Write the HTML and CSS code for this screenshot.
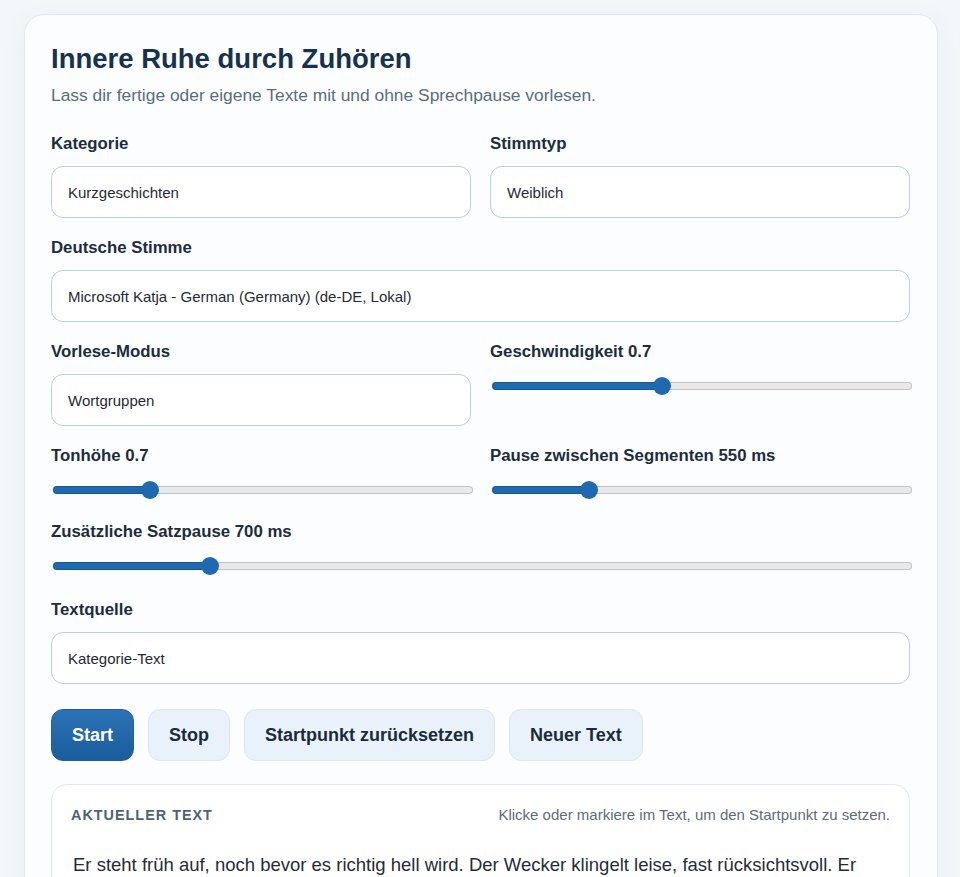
FILE: index.html
```html
<!DOCTYPE html>
<html lang="de">
<head>
<meta charset="utf-8">
<title>Innere Ruhe durch Zuhören</title>
<link rel="stylesheet" href="styles.css">
</head>
<body>
<div class="page">
  <main class="card">
    <h1 class="title">Innere Ruhe durch Zuhören</h1>
    <p class="subtitle">Lass dir fertige oder eigene Texte mit und ohne Sprechpause vorlesen.</p>

    <div class="form-grid">
      <div class="field">
        <label class="label">Kategorie</label>
        <select class="select"><option>Kurzgeschichten</option></select>
      </div>
      <div class="field">
        <label class="label">Stimmtyp</label>
        <select class="select"><option>Weiblich</option></select>
      </div>
      <div class="field field-wide">
        <label class="label">Deutsche Stimme</label>
        <select class="select"><option>Microsoft Katja - German (Germany) (de-DE, Lokal)</option></select>
      </div>
      <div class="field">
        <label class="label">Vorlese-Modus</label>
        <select class="select"><option>Wortgruppen</option></select>
      </div>
      <div class="field">
        <label class="label">Geschwindigkeit 0.7</label>
        <input class="range" type="range" min="0" max="100" value="40" style="--p:40%">
      </div>
      <div class="field">
        <label class="label">Tonhöhe 0.7</label>
        <input class="range" type="range" min="0" max="100" value="22" style="--p:22%">
      </div>
      <div class="field">
        <label class="label">Pause zwischen Segmenten 550 ms</label>
        <input class="range" type="range" min="0" max="100" value="22" style="--p:22%">
      </div>
      <div class="field field-wide">
        <label class="label">Zusätzliche Satzpause 700 ms</label>
        <input class="range" type="range" min="0" max="100" value="17.6" step="0.1" style="--p:17.6%">
      </div>
      <div class="field field-wide field-source">
        <label class="label">Textquelle</label>
        <select class="select"><option>Kategorie-Text</option></select>
      </div>
    </div>

    <div class="actions">
      <button class="btn btn-primary">Start</button>
      <button class="btn">Stop</button>
      <button class="btn">Startpunkt zurücksetzen</button>
      <button class="btn">Neuer Text</button>
    </div>

    <section class="reader">
      <div class="reader-head">
        <span class="reader-title">AKTUELLER TEXT</span>
        <span class="reader-hint">Klicke oder markiere im Text, um den Startpunkt zu setzen.</span>
      </div>
      <p class="reader-text">Er steht früh auf, noch bevor es richtig hell wird. Der Wecker klingelt leise, fast rücksichtsvoll. Er öffnet die Augen und bleibt einen Moment still liegen, hört auf das leise Rauschen draußen.</p>
    </section>
  </main>
</div>
</body>
</html>
```

FILE: styles.css
```css
* { box-sizing: border-box; }

html, body {
  margin: 0;
  padding: 0;
  background: #f4f7fa;
  font-family: "Liberation Sans", Arial, sans-serif;
  color: #1b2b3b;
}

.page {
  padding: 14px 22px 0 24px;
}

.card {
  background: #fbfdfe;
  border: 1px solid #e1e8ef;
  border-radius: 20px;
  padding: 27px 27px 30px 26px;
  box-shadow: 0 4px 24px rgba(30, 60, 90, 0.05);
}

.title {
  margin: 0 0 9px;
  font-size: 27.5px;
  line-height: 34px;
  font-weight: 700;
  color: #17324d;
}

.subtitle {
  margin: 0;
  font-size: 17.4px;
  line-height: 21px;
  color: #5b6d7e;
}

.form-grid {
  margin-top: 28px;
  display: grid;
  grid-template-columns: 1fr 1fr;
  column-gap: 19px;
  row-gap: 20px;
}

.field {
  display: flex;
  flex-direction: column;
  min-width: 0;
}

.field-wide { grid-column: 1 / -1; }

.field-source { margin-top: 2px; }

.label {
  display: block;
  font-size: 16.8px;
  line-height: 20px;
  font-weight: 700;
  color: #1c2d3d;
  margin-bottom: 12px;
}

.select {
  -webkit-appearance: none;
  appearance: none;
  height: 52px;
  width: 100%;
  border: 1px solid #b9cfe2;
  border-radius: 12px;
  background: #ffffff;
  padding: 0 16px;
  font-family: "Liberation Sans", Arial, sans-serif;
  font-size: 15px;
  color: #1f2b37;
}

.range {
  -webkit-appearance: none;
  appearance: none;
  height: 24px;
  margin: 0 -2px 0 2px;
  width: 100%;
  background: transparent;
  padding: 0;
}

.range::-webkit-slider-runnable-track {
  height: 8px;
  border-radius: 4px;
  background: linear-gradient(to right, #1f69b1 0, #1f69b1 var(--p), #e9e9e9 var(--p), #e9e9e9 100%);
  box-shadow: inset 0 0 0 1px rgba(0, 0, 0, 0.16);
}

.range::-webkit-slider-thumb {
  -webkit-appearance: none;
  appearance: none;
  width: 18px;
  height: 18px;
  margin-top: -5px;
  border-radius: 50%;
  background: #1f69b1;
  border: none;
}

.actions {
  display: flex;
  gap: 14px;
  margin-top: 25px;
}

.btn {
  height: 52px;
  padding: 0 20px;
  border: 1px solid #dbe6f1;
  border-radius: 12px;
  background: #e9f2fb;
  font-family: "Liberation Sans", Arial, sans-serif;
  font-size: 18px;
  font-weight: 700;
  color: #1b2b3b;
}

.btn-primary {
  background: linear-gradient(180deg, #2b73b7 0%, #1b5c9b 100%);
  border-color: #1f5f9f;
  color: #ffffff;
}

.reader {
  margin-top: 23px;
  background: #ffffff;
  border: 1px solid #e3e9ef;
  border-radius: 16px;
  padding: 20px 19px 20px 19px;
}

.reader-head {
  display: flex;
  justify-content: space-between;
  align-items: center;
}

.reader-title {
  font-size: 14.4px;
  font-weight: 700;
  letter-spacing: 1px;
  color: #4b6379;
  line-height: 20px;
}

.reader-hint {
  font-size: 15px;
  color: #5d6d7c;
  line-height: 20px;
}

.reader-text {
  margin: 26px 0 0 2px;
  font-size: 18.5px;
  line-height: 28px;
  color: #1f2d3a;
}
```
